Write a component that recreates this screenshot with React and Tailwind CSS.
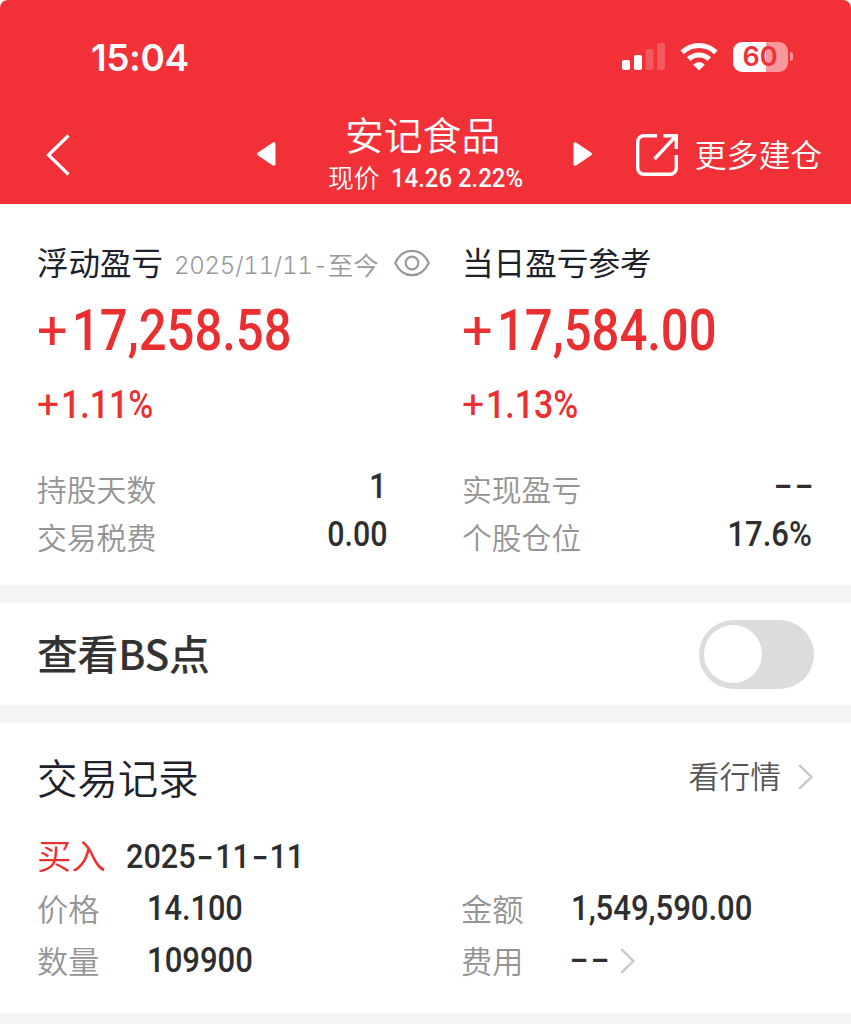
import React, { useState } from "react";

// DIN-like figures: Roboto squeezed horizontally
function Num({ children, className = "" }) {
  return (
    <span className={`inline-block whitespace-nowrap font-['Roboto',sans-serif] font-medium ${className}`}>
      {children}
    </span>
  );
}

// wide thin hyphen
function Dash({ className = "" }) {
  return (
    <span className={`inline-block scale-x-[1.25] font-['Inter',sans-serif] font-medium leading-none ${className}`}>
      -
    </span>
  );
}

function Empty() {
  return (
    <span className="flex gap-[5px] pb-[5px] text-[35px]">
      <Dash />
      <Dash />
    </span>
  );
}

function Chevron() {
  return (
    <svg width="16" height="26" viewBox="0 0 16 26" fill="none" stroke="#c8c8c8" strokeWidth="2.4">
      <path d="M1.2 1.2 13.4 13 1.2 24.8" />
    </svg>
  );
}

function StatusBar() {
  return (
    <div className="flex h-[114px] items-center pb-px pl-[91px] pr-[58px]">
      <span className="pt-px font-['Inter',sans-serif] text-[37px] font-semibold leading-none tracking-[-0.4px]">15:04</span>
      <div className="ml-auto flex items-center">
        <svg width="43" height="27" viewBox="0 0 43 27" fill="#fff">
          <rect x="0" y="17" width="8" height="10" rx="2" />
          <rect x="12" y="12" width="8" height="15" rx="2" />
          <rect x="23.5" y="6" width="8" height="21" rx="2" opacity=".2" />
          <rect x="35" y="0" width="8" height="27" rx="2" opacity=".2" />
        </svg>
        <svg className="ml-[15px]" width="38" height="28" viewBox="0 0 38 28" fill="none" stroke="#fff" strokeWidth="5">
          <path d="M2.2 9.4a24 24 0 0 1 33.6 0" />
          <path d="M8.7 16.1a14.8 14.8 0 0 1 20.6 0" />
          <path d="M19 27.6l-5.8-5.9a8.3 8.3 0 0 1 11.6 0z" fill="#fff" stroke="none" />
        </svg>
        <div className="ml-[15px] flex h-[30px] w-[55px] items-center justify-center rounded-[9px] bg-linear-to-r from-white from-60% to-[#f8979c] to-60%">
          <span className="pr-px font-['Inter',sans-serif] text-[27px] font-semibold leading-none text-[#f23038]">60</span>
        </div>
        <div className="ml-[2px] h-[9px] w-[3px] rounded-r-full bg-[#f8979c]" />
      </div>
    </div>
  );
}

function NavBar() {
  return (
    <div className="flex h-[90px] items-center pl-[46px] pr-[29px]">
      <svg className="mt-[-9px]" width="24" height="42" viewBox="0 0 24 42" fill="none" stroke="#fff" strokeWidth="3.2">
        <path d="M22.5 1.5 2.5 21l20 19.5" />
      </svg>
      <svg className="ml-[187px] mt-[-10px]" width="19" height="24" viewBox="0 0 19 24" fill="#fff">
        <path d="M.7 10.8 15.5.8c1.500-1 3-.4 3 1.400v19.600c0 1.800-1.500 2.400-3 1.400L.7 13.200c-.9-.7-.9-1.700 0-2.400z" />
      </svg>
      <div className="ml-[51px] flex w-[200px] flex-col">
        <div className="h-[44px] pl-[18px] text-[38.800px] font-[350] leading-[34px]">安记食品</div>
        <div className="flex h-[42px] items-center whitespace-nowrap text-[25.800px] font-[350] leading-none">
          <span className="pb-[8px] pl-px">现价</span>
          <Num className="ml-[11px] origin-left scale-x-[.92] pb-[6px] text-[26px]">14.26 2.22%</Num>
        </div>
      </div>
      <svg className="ml-[46px] mt-[-10px]" width="19" height="24" viewBox="0 0 19 24" fill="#fff">
        <path d="M18.300 10.800 3.500.8C2 -.2.5.4.5 2.200v19.600c0 1.800 1.500 2.400 3 1.400l14.800-10c.9-.7.9-1.700 0-2.400z" />
      </svg>
      <svg className="ml-[44px] mt-[-9px]" width="43" height="42" viewBox="0 0 43 42" fill="none" stroke="#fff" strokeWidth="3.400">
        <path d="M21 1.700H8A6.300 6.300 0 0 0 1.700 8v26A6.300 6.300 0 0 0 8 40.300h26a6.300 6.300 0 0 0 6.300-6.300V21" />
        <path d="M27.500 1.700h12.800V15M40 2 18.500 25" />
        <path d="M34 1.500h7v7z" fill="#fff" stroke="none" />
      </svg>
      <span className="ml-auto mt-[-10px] text-[31.800px] font-[350] leading-none">更多建仓</span>
    </div>
  );
}

function StatRow({ label, children }) {
  return (
    <div className="flex h-12 items-center justify-between">
      <span className="pb-[10px] text-[29.800px] font-[350] text-[#949494]">{label}</span>
      <span className="pb-[12px] text-[#2e2e2e]">{children}</span>
    </div>
  );
}

// signed amount with a detached, wider plus
function Amount({ children, className = "", plusClass = "", numClass = "" }) {
  return (
    <div className={`flex items-center text-[#ea2f31] ${className}`}>
      <span className={`font-['Roboto',sans-serif] font-normal ${plusClass}`}>+</span>
      <Num className={`origin-left ${numClass}`}>{children}</Num>
    </div>
  );
}

function Summary() {
  return (
    <div className="flex h-[381px] pl-[37px] pt-[36px]">
      <div className="w-[425px]">
        <div className="flex h-[46px] items-center">
          <span className="pb-[2px] text-[31.500px] text-[#1d2129]">浮动盈亏</span>
          <span className="ml-[11px] flex items-center whitespace-nowrap text-[#999]">
            <span className="pt-[5px] font-['Inter',sans-serif] text-[24px] font-light tabular-nums tracking-[-0.25px]">
              2025/11/11-
            </span>
            <span className="pt-[2px] text-[25.500px] font-[350]">至今</span>
          </span>
          <svg className="ml-[15px]" width="36" height="28" viewBox="0 0 36 28" fill="none" stroke="#999" strokeWidth="2.200">
            <path d="M1.200 14C5 6 11 1.800 18 1.800S31 6 34.800 14C31 22 25 26.200 18 26.200S5 22 1.200 14z" />
            <circle cx="18" cy="14" r="6.300" />
          </svg>
        </div>
        <Amount className="h-[88px] text-[58px]" plusClass="w-[35px] text-[54px]" numClass="scale-x-[.845]">
          17,258.58
        </Amount>
        <Amount className="h-[63px] text-[39px]" plusClass="w-[24px]" numClass="scale-x-[.87]">
          1.11%
        </Amount>
        <div className="mt-[32px] w-[350px]">
          <StatRow label="持股天数">
            <Num className="origin-right scale-x-[.88] text-[34.500px]">1</Num>
          </StatRow>
          <StatRow label="交易税费">
            <Num className="origin-right scale-x-[.88] text-[34.500px]">0.00</Num>
          </StatRow>
        </div>
      </div>
      <div className="w-[350px]">
        <div className="flex h-[46px] items-center pb-[2px] text-[31.600px] text-[#1d2129]">当日盈亏参考</div>
        <Amount className="h-[88px] text-[58px]" plusClass="w-[35px] text-[54px]" numClass="scale-x-[.845]">
          17,584.00
        </Amount>
        <Amount className="h-[63px] text-[39px]" plusClass="w-[24px]" numClass="scale-x-[.87]">
          1.13%
        </Amount>
        <div className="mt-[32px]">
          <StatRow label="实现盈亏">
            <Empty />
          </StatRow>
          <StatRow label="个股仓位">
            <Num className="origin-right scale-x-[.9] text-[34.500px]">17.6%</Num>
          </StatRow>
        </div>
      </div>
    </div>
  );
}

function Field({ label, children }) {
  return (
    <div className="flex h-[52px] items-center">
      <span className="w-[110px] text-[31.200px] font-[350] text-[#949494]">{label}</span>
      <span className="flex items-center pt-[2px] text-[#2e2e2e]">{children}</span>
    </div>
  );
}

function TradeRecords() {
  return (
    <div className="h-[290px] pl-[37px] pr-[37px] pt-[24px]">
      <div className="flex h-[60px] items-center">
        <span className="text-[40.400px] font-[350] text-[#1d2129]">交易记录</span>
        <span className="ml-auto mr-[17px] pb-[3px] text-[30.800px] font-[350] text-[#555]">看行情</span>
        <Chevron />
      </div>
      <div className="mt-[23px] flex h-[52px] items-center">
        <span className="pb-[2px] text-[34.500px] font-[350] text-[#ea2f31]">买入</span>
        <Num className="ml-[20px] origin-left scale-x-[.9] text-[34px] text-[#2e2e2e]">
          2025
          <Dash className="mx-[3px]" />
          11
          <Dash className="mx-[3px]" />
          11
        </Num>
      </div>
      <div className="grid grid-cols-[424px_1fr]">
        <Field label="价格">
          <Num className="origin-left scale-x-[.89] text-[34.500px]">14.100</Num>
        </Field>
        <Field label="金额">
          <Num className="origin-left scale-x-[.9] text-[34.500px]">1,549,590.00</Num>
        </Field>
        <Field label="数量">
          <Num className="origin-left scale-x-[.9] text-[34.500px]">109900</Num>
        </Field>
        <Field label="费用">
          <Empty />
          <span className="ml-[12px]">
            <Chevron />
          </span>
        </Field>
      </div>
    </div>
  );
}

function App() {
  const [showBS, setShowBS] = useState(false);

  return (
    <div className="h-[1024px] w-[851px] overflow-hidden bg-white font-['Noto_Sans_CJK_SC',sans-serif]">
      {/* Header */}
      <div className="h-[204px] rounded-t-[8px] bg-[#f23038] text-white">
        <StatusBar />
        <NavBar />
      </div>

      <Summary />
      <div className="h-[18px] bg-[#f4f4f4]" />

      {/* BS switch */}
      <div className="flex h-[102px] items-center justify-between px-[37px]">
        <span className="pb-[2px] text-[40.800px] font-medium leading-none tracking-[-0.2px] text-[#333]">查看BS点</span>
        <button
          className={`flex h-[69px] w-[115px] items-center rounded-full px-[5px] ${
            showBS ? "justify-end bg-[#ea2f31]" : "bg-[#dcdcdc]"
          }`}
          onClick={() => setShowBS(!showBS)}
        >
          <span className="h-[58px] w-[58px] rounded-full bg-white" />
        </button>
      </div>
      <div className="h-[18px] bg-[#f4f4f4]" />

      <TradeRecords />
      <div className="h-[11px] bg-[#f4f4f4]" />
    </div>
  );
}

export default App;
